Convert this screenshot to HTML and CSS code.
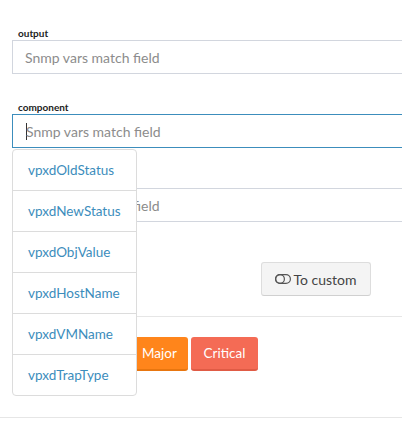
FILE: index.html
```html
<!DOCTYPE html>
<html>
<head>
<meta charset="utf-8">
<link rel="stylesheet" href="styles.css">
</head>
<body>
<div class="page">
  <div class="form-group">
    <label class="lbl">output</label>
    <div class="field"><span class="ph">Snmp vars match field</span></div>
  </div>
  <div class="form-group">
    <label class="lbl">component</label>
    <div class="field-wrap">
      <div class="field focus"><span class="caret"></span><span class="ph">Snmp vars match field</span></div>
      <ul class="dropdown">
        <li>vpxdOldStatus</li>
        <li>vpxdNewStatus</li>
        <li>vpxdObjValue</li>
        <li>vpxdHostName</li>
        <li>vpxdVMName</li>
        <li>vpxdTrapType</li>
      </ul>
    </div>
  </div>
  <div class="form-group">
    <div class="lbl"></div>
    <div class="field"><span class="ph">Snmp vars match field</span></div>
  </div>
  <div class="custom-row">
    <button class="btn-default"><svg class="tog" width="16" height="10" viewBox="0 0 16 10"><rect x="0.6" y="0.6" width="14.8" height="8.8" rx="4.4" fill="none" stroke="#555" stroke-width="1.2"/><circle cx="5" cy="5" r="4.4" fill="none" stroke="#555" stroke-width="1.2"/></svg>To custom</button>
  </div>
  <div class="sev-row">
    <button class="sev s-major">Major</button>
    <button class="sev s-crit">Critical</button>
  </div>
</div>
</body>
</html>
```
FILE: styles.css
```css
html, body {
  margin: 0;
  padding: 0;
  background: #fff;
  overflow: hidden;
}
body {
  font-family: Lato, "Open Sans", sans-serif;
  width: 402px;
  height: 433px;
}
.page {
  padding-top: 26px;
}
.form-group {
  padding-left: 12px;
  margin-bottom: 26px;
  width: 420px;
}
.lbl {
  display: block;
  height: 14px;
  line-height: 14px;
  font-size: 10px;
  font-weight: 700;
  color: #222;
  padding-left: 6px;
}
.field-wrap {
  position: relative;
}
.field {
  box-sizing: border-box;
  height: 34px;
  border: 1px solid #d2d6de;
  padding: 0 12px;
  display: flex;
  align-items: center;
  font-size: 14px;
  color: #999;
}
.field.focus {
  border-color: #3c8dbc;
}
.caret {
  width: 1px;
  height: 17px;
  background: #333;
  margin-left: 1px;
  margin-right: -1px;
}
.ph {
  color: #8c8c8c;
}
.dropdown {
  position: absolute;
  z-index: 5;
  top: 35px;
  left: 0;
  width: 125px;
  box-sizing: border-box;
  margin: 0;
  padding: 0;
  list-style: none;
  background: #fff;
  border: 1px solid #dcdcdc;
  border-radius: 4px;
}
.dropdown li {
  height: 40px;
  line-height: 40px;
  padding-left: 15px;
  font-size: 13.5px;
  color: #3c8dbc;
  border-top: 1px solid #dcdcdc;
}
.dropdown li:first-child {
  border-top: none;
}
.custom-row {
  margin-left: 12px;
  padding-left: 249px;
  padding-bottom: 20px;
  border-bottom: 1px solid #e6e6e6;
  margin-top: 40px;
}
.btn-default {
  box-sizing: border-box;
  width: 110px;
  height: 34px;
  font-family: inherit;
  font-size: 14px;
  color: #444;
  background: #f4f4f4;
  border: 1px solid #ddd;
  border-bottom-color: #d0d0d0;
  border-radius: 3px;
  display: flex;
  align-items: center;
  justify-content: center;
  gap: 2px;
  padding: 0;
}
.tog {
  display: block;
}
.sev-row {
  display: flex;
  gap: 3px;
  padding: 20px 0 46px 131px;
  border-bottom: 1px solid #e6e6e6;
}
.sev {
  height: 34px;
  box-sizing: border-box;
  border: none;
  border-radius: 3px;
  font-family: inherit;
  font-size: 13.5px;
  color: #fff;
  padding: 0 11px;
}
.s-major { background: #ff851b; border-bottom: 2px solid #e8760f; width: 57px; text-align: left; }
.s-crit { background: #f46b55; border-bottom: 2px solid #e05b45; width: 67px; text-align: center; }
```
